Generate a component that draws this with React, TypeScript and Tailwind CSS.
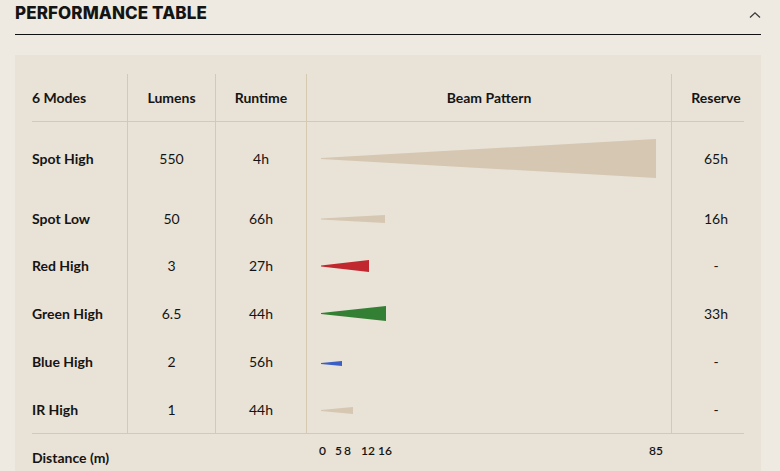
const PX_PER_M = 3.94

const modes = [
  { name: 'Spot High', lumens: '550', runtime: '4h', reserve: '65h', dist: 85, h: 39, color: '#d5c7b1', row: 'h-[73px]', beam: '-mt-[1px]' },
  { name: 'Spot Low', lumens: '50', runtime: '66h', reserve: '16h', dist: 16.3, h: 8, color: '#d5c7b1', row: 'h-[47px]', beam: 'mt-[1px]' },
  { name: 'Red High', lumens: '3', runtime: '27h', reserve: '-', dist: 12.2, h: 12, color: '#c1272f', row: 'h-[47px]', beam: '' },
  { name: 'Green High', lumens: '6.5', runtime: '44h', reserve: '33h', dist: 16.5, h: 15, color: '#337f33', row: 'h-[48px]', beam: '' },
  { name: 'Blue High', lumens: '2', runtime: '56h', reserve: '-', dist: 5.3, h: 5, color: '#3b5fc4', row: 'h-[48px]', beam: 'mt-[5px]' },
  { name: 'IR High', lumens: '1', runtime: '44h', reserve: '-', dist: 8, h: 7, color: '#d5c7b1', row: 'h-[48px]', beam: 'mt-[3px]' },
]

const ticks = [
  { label: '0', left: 'left-[13px]' },
  { label: '5', left: 'left-[29px]' },
  { label: '8', left: 'left-[38px]' },
  { label: '12', left: 'left-[55px]' },
  { label: '16', left: 'left-[72px]' },
  { label: '85', left: 'left-[343px]' },
]

function Beam({ w, h, color }: { w: number; h: number; color: string }) {
  const mid = h / 2
  return (
    <svg width={w} height={h} viewBox={`0 0 ${w} ${h}`} className="block">
      <polygon points={`0,${mid - 0.4} ${w},0 ${w},${h} 0,${mid + 0.4}`} fill={color} />
    </svg>
  )
}

export default function App() {
  const line = 'border-l border-[#d6c9b2]'
  return (
    <div className="h-[471px] w-[780px] overflow-hidden bg-[#eeeae2] pl-[15px] pr-[19px] font-['Lato',sans-serif] text-[#141414]">
      <div className="flex h-[35px] items-start justify-between border-b border-[#111]">
        <h2 className="pt-[3px] font-['Inter',sans-serif] text-[17px] leading-[20px] font-extrabold tracking-[0.1px]">
          PERFORMANCE TABLE
        </h2>
        <svg width="12" height="8" viewBox="0 0 12 8" className="mt-[11px]">
          <polyline points="1,6.5 6,1.8 11,6.5" fill="none" stroke="#3a3a3a" strokeWidth="1.3" />
        </svg>
      </div>

      <div className="mt-[20px] h-[420px] bg-[#e9e2d6] pt-[19px] pl-[17px]">
        {/* header */}
        <div className="flex h-[47px] text-[14px] font-bold">
          <div className="flex w-[95px] items-center">6 Modes</div>
          <div className={`flex w-[88px] items-center justify-center ${line}`}>Lumens</div>
          <div className={`flex w-[91px] items-center justify-center ${line}`}>Runtime</div>
          <div className={`flex w-[365px] items-center justify-center ${line}`}>Beam Pattern</div>
          <div className={`flex w-[89px] items-center justify-center ${line}`}>Reserve</div>
        </div>
        <div className="h-px w-[712px] bg-[#d6c9b2]" />

        {modes.map((m) => (
          <div key={m.name} className={`flex text-[14px] ${m.row}`}>
            <div className="flex w-[95px] items-center font-bold">{m.name}</div>
            <div className={`flex w-[88px] items-center justify-center ${line}`}>{m.lumens}</div>
            <div className={`flex w-[91px] items-center justify-center ${line}`}>{m.runtime}</div>
            <div className={`flex w-[365px] items-center pl-[14px] ${line}`}>
              <div className={m.beam}>
                <Beam w={Math.round(m.dist * PX_PER_M)} h={m.h} color={m.color} />
              </div>
            </div>
            <div className={`flex w-[89px] items-center justify-center ${line}`}>{m.reserve}</div>
          </div>
        ))}
        <div className="h-px w-[712px] bg-[#d6c9b2]" />

        {/* distance scale */}
        <div className="flex h-[47px] text-[14px]">
          <div className="flex w-[274px] items-center font-bold">Distance (m)</div>
          <div className="relative w-[365px]">
            {ticks.map((t) => (
              <span key={t.label} className={`absolute top-[10px] text-[12px] leading-[14px] font-semibold ${t.left}`}>
                {t.label}
              </span>
            ))}
          </div>
        </div>
      </div>
    </div>
  )
}
